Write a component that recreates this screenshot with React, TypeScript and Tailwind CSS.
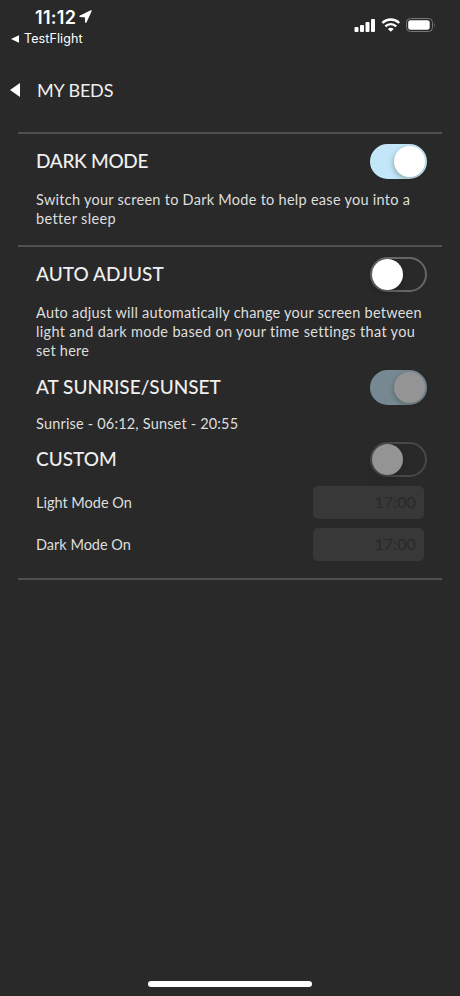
import { useState, type ReactNode } from "react";
import clsx from "clsx";

interface ToggleProps {
  label: string;
  checked: boolean;
  disabled?: boolean;
  onChange: (checked: boolean) => void;
}

function Toggle({ label, checked, disabled, onChange }: ToggleProps) {
  return (
    <button
      type="button"
      role="switch"
      aria-label={label}
      aria-checked={checked}
      disabled={disabled}
      onClick={() => onChange(!checked)}
      className={clsx(
        "flex h-[35px] w-[57px] shrink-0 items-center rounded-full border-2",
        checked
          ? "justify-end border-[#c3e7f8] bg-[#c3e7f8]"
          : "justify-start border-[#666666] bg-transparent",
        disabled && "opacity-50",
      )}
    >
      <span
        className={clsx(
          "h-[31px] w-[31px] rounded-full bg-white",
          checked
            ? "shadow-[-1px_2px_5px_rgba(0,0,0,0.25)]"
            : "shadow-[0_3px_6px_rgba(0,0,0,0.2)]",
        )}
      />
    </button>
  );
}

function Heading({ children, className }: { children: ReactNode; className?: string }) {
  return (
    <h2
      className={clsx(
        "pb-[2px] text-[19px] leading-6 font-medium whitespace-nowrap text-[#efefef]",
        className,
      )}
    >
      {children}
    </h2>
  );
}

function Line({ children, className }: { children: ReactNode; className?: string }) {
  return (
    <span
      className={clsx(
        "block text-[14.5px] leading-[19px] whitespace-nowrap text-[#dedede] [font-variant-ligatures:none]",
        className,
      )}
    >
      {children}
    </span>
  );
}

function StatusBar() {
  return (
    <header className="flex h-[54px] justify-between pr-[24px] font-['Inter',sans-serif] text-white">
      <div>
        <div className="flex h-[27px] items-end gap-[3px] pl-[35px]">
          <span className="text-[18px] leading-[19px] font-semibold tracking-[0.3px]">11:12</span>
          <svg width="13" height="13" viewBox="0 0 13 13" className="mb-[4px]">
            <path
              d="M12 1 1 6.3l5.6.4.2 5.5Z"
              fill="white"
              stroke="white"
              strokeWidth="1.4"
              strokeLinejoin="round"
            />
          </svg>
        </div>
        <div className="flex h-[24px] items-center gap-[5px] pl-[11px]">
          <svg width="8" height="8" viewBox="0 0 8 8">
            <path d="M0 4 8 .2v7.6Z" fill="white" />
          </svg>
          <span className="text-[12.5px] leading-4 tracking-[0.1px]">TestFlight</span>
        </div>
      </div>
      <svg width="82" height="16" viewBox="0 0 82 16" className="mt-[17px]">
        <g fill="white">
          <rect x="0.5" y="10" width="4" height="5" rx="1" />
          <rect x="6" y="8" width="4" height="7" rx="1" />
          <rect x="11.5" y="5" width="4" height="10" rx="1" />
          <rect x="17" y="2" width="4" height="13" rx="1" />
        </g>
        <g fill="none" stroke="white" strokeWidth="2.4">
          <path d="M28.4 6a12 12 0 0 1 16.8 0" />
          <path d="M31.4 9.3a7.7 7.7 0 0 1 10.8 0" />
        </g>
        <path d="M33.9 11.9a4.4 4.4 0 0 1 5.8 0l-2.9 2.9Z" fill="white" />
        <rect x="52.5" y="1.5" width="26" height="13" rx="4" fill="none" stroke="#777777" />
        <rect x="54.2" y="3.2" width="21.5" height="9.6" rx="2.4" fill="white" />
        <path d="M80 5.8q1.8 2.2 0 4.4Z" fill="#777777" />
      </svg>
    </header>
  );
}

function TimeField({ label, value, className }: { label: string; value: string; className?: string }) {
  return (
    <div className="flex h-[33px] items-center justify-between pr-[18px] pl-[18px]">
      <Line className={className}>{label}</Line>
      <div className="flex h-[33px] w-[111px] items-center justify-end rounded-[5px] bg-[#383838] pr-[8px] pb-px text-[16px] tracking-[0.1px] text-[#292929]">
        {value}
      </div>
    </div>
  );
}

export default function App() {
  const [darkMode, setDarkMode] = useState(true);
  const [autoAdjust, setAutoAdjust] = useState(false);
  const [sunset, setSunset] = useState(true);
  const [custom, setCustom] = useState(false);

  return (
    <div className="flex h-[996px] w-[460px] flex-col overflow-hidden bg-[#292929] font-['Lato',sans-serif]">
      <StatusBar />

      <nav className="flex h-[78px] items-center gap-[17px] pb-[6px] pl-[10px]">
        <svg width="10" height="14" viewBox="0 0 10 14">
          <path d="M0 7 10 0v14Z" fill="white" />
        </svg>
        <h1 className="text-[18px] leading-6 tracking-[-0.15px] whitespace-nowrap text-[#efefef]">MY BEDS</h1>
      </nav>

      <main className="mx-[18px]">
        <section className="h-[113px] border-t-2 border-[#505050] pt-[10px]">
          <div className="flex h-[35px] items-center justify-between pr-[15px] pl-[18px]">
            <Heading className="tracking-[-0.3px]">DARK MODE</Heading>
            <Toggle label="Dark mode" checked={darkMode} onChange={setDarkMode} />
          </div>
          <p className="pt-[11px] pl-[18px]">
            <Line className="tracking-[0.27px]">Switch your screen to Dark Mode to help ease you into a</Line>
            <Line className="tracking-[0.38px]">better sleep</Line>
          </p>
        </section>

        <section className="h-[335px] border-y-2 border-[#505050] pt-[10px]">
          <div className="flex h-[35px] items-center justify-between pr-[15px] pl-[18px]">
            <Heading className="tracking-[0.05px]">AUTO ADJUST</Heading>
            <Toggle label="Auto adjust" checked={autoAdjust} onChange={setAutoAdjust} />
          </div>
          <p className="pt-[11px] pl-[18px]">
            <Line className="tracking-[0.24px]">Auto adjust will automatically change your screen between</Line>
            <Line className="tracking-[0.33px]">light and dark mode based on your time settings that you</Line>
            <Line className="tracking-[0.25px]">set here</Line>
          </p>

          <div className="mt-[10px] flex h-[35px] items-center justify-between pr-[15px] pl-[18px]">
            <Heading>AT SUNRISE/SUNSET</Heading>
            <Toggle label="At sunrise/sunset" checked={sunset} disabled={!autoAdjust} onChange={setSunset} />
          </div>
          <div className="pt-[9px] pl-[18px]">
            <Line className="tracking-[0.18px]">Sunrise - 06:12, Sunset - 20:55</Line>
          </div>

          <div className="mt-[9px] flex h-[35px] items-center justify-between pr-[15px] pl-[18px]">
            <Heading>CUSTOM</Heading>
            <Toggle label="Custom" checked={custom} disabled={!autoAdjust} onChange={setCustom} />
          </div>
          <div className="mt-[9px] flex flex-col gap-[9px]">
            <TimeField label="Light Mode On" value="17:00" />
            <TimeField label="Dark Mode On" value="17:00" />
          </div>
        </section>
      </main>

      <footer className="mt-auto flex justify-center pb-[9px]">
        <div className="h-[6px] w-[164px] rounded-full bg-white" />
      </footer>
    </div>
  );
}
